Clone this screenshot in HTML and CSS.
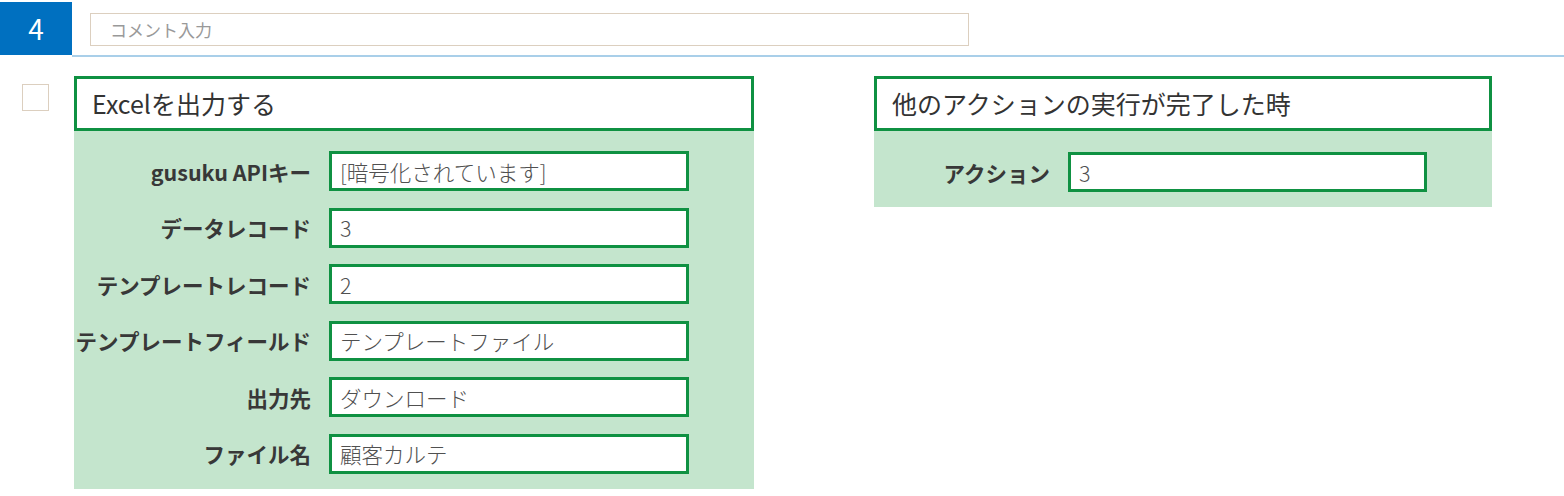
FILE: index.html
```html
<!DOCTYPE html>
<html lang="ja">
<head>
  <meta charset="UTF-8" />
  <meta name="viewport" content="width=device-width, initial-scale=1.0" />
  <title>アクション設定</title>
  <link rel="stylesheet" href="styles.css">
</head>
<body>
  <div class="step-head">
    <div class="step-no">4</div>
    <div class="comment-wrap">
      <input class="comment" type="text" placeholder="コメント入力">
    </div>
  </div>

  <div class="step-body">
    <div class="check"></div>

    <div class="card card-main">
      <div class="card-title">Excelを出力する</div>
      <div class="card-form">
        <label class="label">gusuku APIキー</label>
        <input class="field" type="text" value="[暗号化されています]" readonly>
        <label class="label">データレコード</label>
        <input class="field" type="text" value="3" readonly>
        <label class="label">テンプレートレコード</label>
        <input class="field" type="text" value="2" readonly>
        <label class="label">テンプレートフィールド</label>
        <input class="field" type="text" value="テンプレートファイル" readonly>
        <label class="label">出力先</label>
        <input class="field" type="text" value="ダウンロード" readonly>
        <label class="label">ファイル名</label>
        <input class="field" type="text" value="顧客カルテ" readonly>
      </div>
    </div>

    <div class="card card-trigger">
      <div class="card-title">他のアクションの実行が完了した時</div>
      <div class="card-form">
        <label class="label">アクション</label>
        <input class="field" type="text" value="3" readonly>
      </div>
    </div>
  </div>
</body>
</html>
```

FILE: styles.css
```css
body {
  margin: 0;
  font-family: "Noto Sans CJK JP", "Noto Sans", sans-serif;
  color: #333;
  background: #fff;
}

.step-head {
  display: flex;
  padding-top: 2px;
}

.step-no {
  width: 72px;
  height: 53px;
  background: #0070c0;
  color: #fff;
  font-size: 28px;
  line-height: 53px;
  text-align: center;
}

.comment-wrap {
  flex: 1;
  padding: 11px 0 0 18px;
  border-bottom: 2px solid #a9cfe9;
  height: 55px;
  box-sizing: border-box;
}

.comment {
  width: 879px;
  height: 33px;
  box-sizing: border-box;
  border: 1px solid #dccfbf;
  padding: 0 19px;
  font-family: inherit;
  font-size: 17px;
  color: #555;
  outline: none;
}

.comment::placeholder {
  color: #999;
}

.step-body {
  display: flex;
  align-items: flex-start;
  padding-top: 19px;
}

.check {
  width: 27px;
  height: 27px;
  box-sizing: border-box;
  border: 1px solid #dccfbf;
  margin: 8px 0 0 22px;
}

.card-main {
  width: 680px;
  margin-left: 25px;
}

.card-trigger {
  width: 618px;
  margin-left: 120px;
}

.card-title {
  height: 55px;
  box-sizing: border-box;
  border: 3px solid #0f9142;
  padding-left: 15px;
  font-size: 25px;
  line-height: 49px;
  background: #fff;
}

.card-form {
  display: grid;
  grid-template-columns: 237px 360px;
  column-gap: 18px;
  row-gap: 16.6px;
  align-items: center;
  background: #c4e5cd;
  padding: 20px 0 15px;
}

.card-trigger .card-form {
  grid-template-columns: 176px 359px;
  padding-top: 21px;
}

.label {
  text-align: right;
  font-size: 21.5px;
  font-weight: bold;
  color: #383838;
  white-space: nowrap;
}

.field {
  height: 40px;
  box-sizing: border-box;
  border: 3px solid #0f9142;
  padding: 0 8px;
  font-family: inherit;
  font-size: 21.5px;
  font-weight: 300;
  color: #505050;
  background: #fff;
  outline: none;
}
```
